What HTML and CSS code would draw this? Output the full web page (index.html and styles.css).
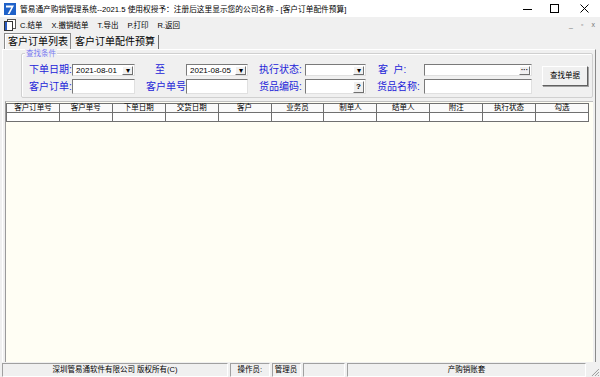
FILE: index.html
```html
<!DOCTYPE html>
<html>
<head>
<meta charset="utf-8">
<link rel="stylesheet" href="styles.css">
</head>
<body>

<div class="titlebar">
  <svg class="app-icon" width="12" height="12" viewBox="0 0 12 12">
    <rect width="12" height="12" fill="#1f62c9"/>
    <path d="M2 2.5 H10 L5.5 11 H3.6 L7.3 4.4 H2 Z" fill="#fff"/>
  </svg>
  <span class="title">管易通产购销管理系统--2021.5 使用权授予：注册后这里显示您的公司名称 - [客户订单配件预算]</span>
  <div class="winbtns">
    <svg class="wb-min" width="9" height="10" viewBox="0 0 9 10"><path d="M0 5.5 H9" stroke="#000" stroke-width="1"/></svg>
    <svg class="wb-max" width="9" height="9" viewBox="0 0 9 9"><rect x="0.5" y="0.5" width="8" height="8" fill="none" stroke="#000"/></svg>
    <svg class="wb-close" width="9" height="9" viewBox="0 0 9 9"><path d="M0.5 0.5 L8.5 8.5 M8.5 0.5 L0.5 8.5" stroke="#000"/></svg>
  </div>
</div>

<div class="menubar">
  <svg class="menu-icon" width="12" height="12" viewBox="0 0 12 12">
    <rect x="3.5" y="0.5" width="8" height="9" fill="#fff" stroke="#555"/>
    <rect x="0.5" y="2.5" width="8" height="9" fill="#fff" stroke="#333"/>
    <rect x="1" y="3" width="2" height="8" fill="#2a5cc4"/>
  </svg>
  <span class="mi">C.结单</span>
  <span class="mi">X.撤销结单</span>
  <span class="mi">T.导出</span>
  <span class="mi">P.打印</span>
  <span class="mi">R.返回</span>
  <div class="mdi">
    <span>_</span><span>&#x25AB;</span><span>x</span>
  </div>
</div>

<div class="tabs">
  <div class="tab active">客户订单列表</div>
  <div class="tab">客户订单配件预算</div>
</div>

<div class="page">
  <div class="group">
    <span class="legend">查找条件</span>
    <div class="fields">
      <span class="lbl">下单日期:</span>
      <div class="combo date"><span class="val">2021-08-01</span><span class="dd">&#x25BE;</span></div>
      <span class="lbl to">至</span>
      <div class="combo date"><span class="val">2021-08-05</span><span class="dd">&#x25BE;</span></div>
      <span class="lbl pad">执行状态:</span>
      <div class="combo"><span class="val"></span><span class="dd">&#x25BE;</span></div>
      <span class="lbl pad2">客&nbsp;&nbsp;户:</span>
      <div class="combo"><span class="val"></span><span class="dd dots">&middot;&middot;&middot;</span></div>

      <span class="lbl">客户订单:</span>
      <div class="edit"></div>
      <span class="lbl pad">客户单号:</span>
      <div class="edit"></div>
      <span class="lbl pad">货品编码:</span>
      <div class="edit btn-edit"><span class="val"></span><span class="dd q">?</span></div>
      <span class="lbl pad">货品名称:</span>
      <div class="edit"></div>
    </div>
    <div class="search-btn">查找单据</div>
  </div>

  <div class="gridwrap">
    <table class="grid">
      <tr>
        <th>客户订单号</th><th>客户单号</th><th>下单日期</th><th>交货日期</th><th>客户</th><th>业务员</th>
        <th>制单人</th><th>结单人</th><th>附注</th><th>执行状态</th><th>勾选</th>
      </tr>
      <tr>
        <td></td><td></td><td></td><td></td><td></td><td></td><td></td><td></td><td></td><td></td><td></td>
      </tr>
    </table>
  </div>
</div>

<div class="statusbar">
  <div class="panel p1">深圳管易通软件有限公司 版权所有(C)</div>
  <div class="panel p2">操作员:</div>
  <div class="panel p3">管理员</div>
  <div class="panel p4"></div>
  <div class="panel p5">产购销账套</div>
  <svg class="grip" width="10" height="10" viewBox="0 0 10 10">
    <path d="M9 2 L2 9 M9 5 L5 9 M9 8 L8 9" stroke="#999"/>
  </svg>
</div>

</body>
</html>
```

FILE: styles.css
```css
body {
  margin: 0;
  width: 600px;
  height: 377px;
  overflow: hidden;
  background-color: #f0f0f0;
  font-family: "Liberation Sans", "Noto Sans CJK SC", sans-serif;
  color: #000;
  display: flex;
  flex-direction: column;
}

.titlebar {
  height: 17px;
  flex: none;
  background-color: #fff;
  display: flex;
  align-items: center;
  font-size: 7.7px;
}

.app-icon {
  margin: 0 4px 0 4px;
}

.winbtns {
  margin-left: auto;
  display: flex;
  align-items: center;
  margin-right: 11px;
}

.wb-min {
  margin-right: 18px;
}

.wb-max {
  margin-right: 21px;
}

.menubar {
  height: 15px;
  flex: none;
  display: flex;
  align-items: center;
  font-size: 7.5px;
}

.menu-icon {
  margin: 0 4px 0 4px;
}

.mi {
  margin-right: 9px;
}

.mdi {
  margin-left: auto;
  display: flex;
  gap: 8px;
  margin-right: 5px;
  color: #777;
  font-size: 7px;
}

.tabs {
  height: 17px;
  flex: none;
  display: flex;
  align-items: flex-end;
  padding-left: 4px;
  font-size: 10px;
}

.tab {
  height: 14px;
  line-height: 14px;
  padding: 0 3px 0 4px;
  border-right: 1px solid #707070;
}

.tab.active {
  height: 15px;
  line-height: 15px;
  padding: 0 2px 0 3px;
  border: 1px solid #8a8a8a;
  border-bottom: none;
  box-shadow: inset 1px 1px #fff;
}

.page {
  flex: 1;
  margin: 0 4px 0 2px;
  border-left: 1px solid #fff;
  border-top: 1px solid #fff;
  border-right: 1px solid #8a8a8a;
  display: flex;
  flex-direction: column;
}

.group {
  position: relative;
  height: 43px;
  margin: 3px 2px 0 18px;
  border: 1px solid #d0d0d0;
  box-shadow: inset 1px 1px #fff;
  border-radius: 2px;
  display: flex;
}

.legend {
  position: absolute;
  left: 3px;
  top: -5px;
  padding: 0 1px;
  background-color: #f0f0f0;
  color: #7878f0;
  font-size: 7.5px;
  line-height: 9px;
}

.fields {
  display: grid;
  grid-template-columns: 43px 63px 51px 62px 57px 61px 58px 108px;
  grid-template-rows: 12px 15px;
  row-gap: 3px;
  margin: 10px 0 0 7px;
}

.lbl {
  color: #2323d8;
  font-size: 10px;
  line-height: 12px;
  align-self: center;
  white-space: nowrap;
}

.lbl.pad {
  padding-left: 11px;
}

.lbl.pad2 {
  padding-left: 12px;
}

.lbl.to {
  padding-left: 20px;
}

.combo,
.edit {
  background-color: #fff;
  border: 1px solid;
  border-color: #7a7a7a #e0e0e0 #e0e0e0 #7a7a7a;
  display: flex;
  align-items: center;
  box-sizing: border-box;
}

.combo .val,
.edit .val {
  flex: 1;
  font-size: 8px;
  padding-left: 3px;
}

.dd {
  width: 11px;
  height: 9px;
  margin-right: 1px;
  box-sizing: border-box;
  background-color: #f0f0f0;
  border: 1px solid;
  border-color: #fff #707070 #707070 #fff;
  font-size: 8px;
  line-height: 7px;
  text-align: center;
}

.dd.dots {
  font-weight: bold;
  font-size: 7px;
  line-height: 6px;
}

.dd.q {
  height: 12px;
  font-size: 8px;
  font-weight: bold;
  line-height: 10px;
}

.search-btn {
  align-self: flex-start;
  margin: 12px 0 0 10px;
  width: 46px;
  height: 20px;
  box-sizing: border-box;
  border: 1px solid;
  border-color: #fff #606060 #606060 #fff;
  box-shadow: 1px 1px #a0a0a0;
  font-size: 7.5px;
  line-height: 18px;
  text-align: center;
}

.gridwrap {
  flex: 1;
  margin: 3px 2px 0 2px;
  border-left: 1px solid #9a9a9a;
  border-top: 1px solid #c0c0c0;
  background-color: #fffef4;
  padding: 1px 0 0 0;
}

.grid {
  border-collapse: collapse;
  table-layout: fixed;
  width: 583px;
  font-size: 7.5px;
}

.grid th,
.grid td {
  border: 1px solid #707070;
  height: 8px;
  padding: 0;
  line-height: 8px;
  font-weight: normal;
  text-align: center;
}

.grid th {
  background-color: #fafafa;
}

.grid td {
  background-color: #fff;
}

.statusbar {
  height: 15px;
  flex: none;
  display: flex;
  align-items: stretch;
  gap: 2px;
  padding: 1px 0 0 2px;
  box-sizing: border-box;
  font-size: 7.5px;
}

.panel {
  border: 1px solid;
  border-color: #a0a0a0 #fff #fff #a0a0a0;
  text-align: center;
  line-height: 12px;
  box-sizing: border-box;
}

.p1 { width: 228px; }
.p2 { width: 40px; }
.p3 { width: 29px; }
.p4 { width: 43px; }
.p5 { width: 241px; }

.grip {
  align-self: flex-end;
  margin-left: 2px;
}
```
